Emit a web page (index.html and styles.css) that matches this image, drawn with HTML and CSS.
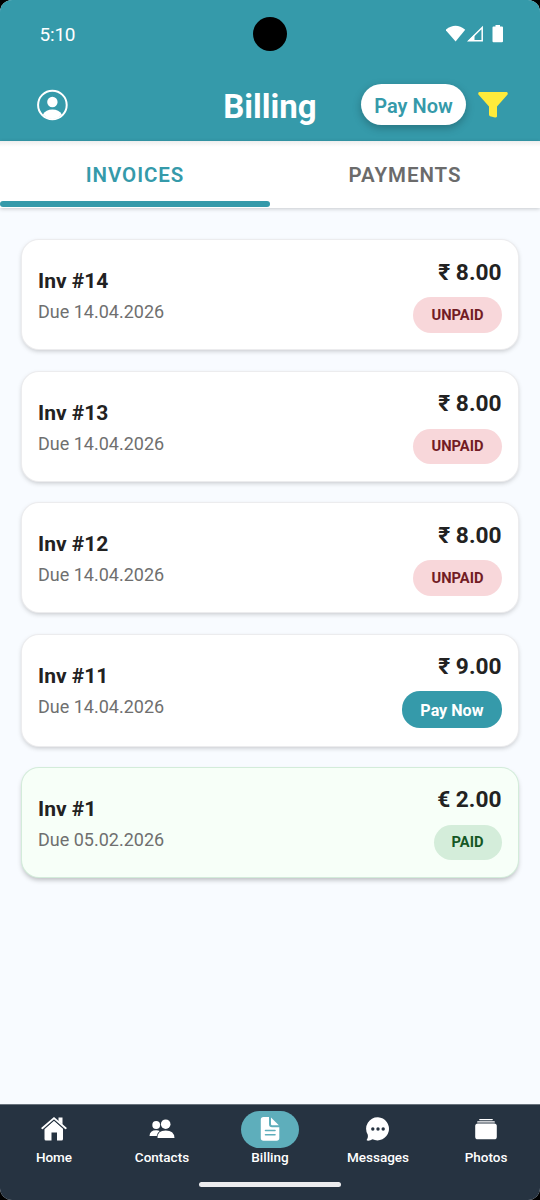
FILE: index.html
```html
<!DOCTYPE html>
<html lang="en">
<head>
<meta charset="utf-8">
<title>Billing</title>
<link rel="stylesheet" href="styles.css">
</head>
<body>
<div class="phone">
  <header class="header">
    <div class="status">
      <span class="clock">5:10</span>
      <span class="camera"></span>
      <svg class="status-icons" width="58" height="18" viewBox="0 0 58 18">
        <path d="M-.5 4.800Q9.600-3.400 19.200 4.800L9.600 16.500Z" fill="#fff"/>
        <path d="M36.200 2.500V15.800H22.800Z" fill="none" stroke="#fff" stroke-width="1.500"/>
        <path d="M22 16L28.500 9.500V16Z" fill="#fff"/>
        <path d="M49.500 0h4.500v1.500h2q1 0 1 1V16.200q0 1-1 1h-8.500q-1 0-1-1V2.500q0-1 1-1h2Z" fill="#fff"/>
      </svg>
    </div>
    <div class="toolbar">
      <svg class="profile" width="32" height="32" viewBox="0 0 32 32">
        <circle cx="16.400" cy="16" r="14.300" fill="none" stroke="#fff" stroke-width="2"/>
        <circle cx="16.400" cy="13" r="5.200" fill="#fff"/>
        <path d="M6.900 25.500Q9.900 20.500 16.400 20.500T25.900 25.500Q21.900 30 16.400 30T6.900 25.500Z" fill="#fff"/>
      </svg>
      <h1 class="title">Billing</h1>
      <div class="actions">
        <button class="pay-top">Pay Now</button>
        <svg class="filter" width="30" height="27" viewBox="0 0 30 27">
          <path d="M1.300 0H28.700Q30.200.4 29.600 2.500L19 14.500V24.500Q18.600 25.800 17 25.500L12 24.200Q11 23.800 11 22.500V14.500L.4 2.500Q-.2.400 1.300 0Z" fill="#ffeb3b"/>
        </svg>
      </div>
    </div>
  </header>
  <nav class="tabs">
    <a class="tab active">INVOICES</a>
    <a class="tab">PAYMENTS</a>
  </nav>
  <main class="list">
    <article class="card">
      <div><h2 class="name">Inv #14</h2><p class="due">Due 14.04.2026</p></div>
      <div class="side"><span class="price">₹ 8.00</span><span class="badge unpaid">UNPAID</span></div>
    </article>
    <article class="card">
      <div><h2 class="name">Inv #13</h2><p class="due">Due 14.04.2026</p></div>
      <div class="side"><span class="price">₹ 8.00</span><span class="badge unpaid">UNPAID</span></div>
    </article>
    <article class="card">
      <div><h2 class="name">Inv #12</h2><p class="due">Due 14.04.2026</p></div>
      <div class="side"><span class="price">₹ 8.00</span><span class="badge unpaid">UNPAID</span></div>
    </article>
    <article class="card payable">
      <div><h2 class="name">Inv #11</h2><p class="due">Due 14.04.2026</p></div>
      <div class="side"><span class="price">₹ 9.00</span><button class="badge pay">Pay Now</button></div>
    </article>
    <article class="card settled">
      <div><h2 class="name">Inv #1</h2><p class="due">Due 05.02.2026</p></div>
      <div class="side"><span class="price">€ 2.00</span><span class="badge paid">PAID</span></div>
    </article>
  </main>
  <footer class="bottom">
    <nav class="nav">
      <a class="item"><span class="icon"><svg width="26" height="26" viewBox="0 0 26 26">
        <path d="M4 12.500L13 4.500L22 12.500V23Q22 24.500 20.500 24.500H16V16.500H10.500V24.500H5Q3.500 24.500 3.500 23V12.500Z" fill="#fff"/>
        <path d="M17.500 1.500H21.500V9.500L17.500 6Z" fill="#fff"/>
        <path d="M1.300 13.300L13 3L24.700 13.300" fill="none" stroke="#263341" stroke-width="2.600"/>
        <path d="M1.300 12.200L13 2.100L24.700 12.200" fill="none" stroke="#fff" stroke-width="1.900" stroke-linecap="round" stroke-linejoin="round"/>
      </svg></span><span class="label">Home</span></a>
      <a class="item"><span class="icon"><svg width="26" height="26" viewBox="0 0 26 26">
        <circle cx="7.200" cy="9" r="3.900" fill="#fff"/>
        <path d="M.5 20Q.7 14.300 7.200 14.300Q9.200 14.300 10.700 14.900Q8.200 16.600 7.700 20Z" fill="#fff"/>
        <circle cx="16.700" cy="8.200" r="4.800" fill="#fff"/>
        <path d="M8.500 21.900Q8.400 14.600 16.700 14.600T25.500 21.900Z" fill="#fff"/>
      </svg></span><span class="label">Contacts</span></a>
      <a class="item"><span class="icon selected"><svg width="26" height="26" viewBox="0 0 26 26">
        <path d="M6.500 1H12V8Q12 11.300 15 11.300H22.300V22Q22.300 24.700 19.600 24.700H6.500Q3.800 24.700 3.800 22V3.700Q3.800 1 6.500 1Z" fill="#fff"/>
        <path d="M14 1.500L21.800 9.300H15Q14 9.300 14 8.300Z" fill="#fff"/>
        <path d="M8.500 14.500H18M8.500 18.700H18" stroke="#5eaebb" stroke-width="1.600" stroke-linecap="round"/>
      </svg></span><span class="label">Billing</span></a>
      <a class="item"><span class="icon"><svg width="26" height="26" viewBox="0 0 26 26">
        <path d="M13 1.200A11.600 11.600 0 1 1 7.500 23.300Q5 25 2.200 24.600Q1.300 24.400 1.900 23.500Q3.400 21.500 2.700 18.500A11.600 11.600 0 0 1 13 1.200Z" fill="#fff"/>
        <g fill="#263341"><circle cx="7.800" cy="13" r="1.700"/><circle cx="13" cy="13" r="1.700"/><circle cx="18.200" cy="13" r="1.700"/></g>
      </svg></span><span class="label">Messages</span></a>
      <a class="item"><span class="icon"><svg width="26" height="26" viewBox="0 0 26 26">
        <rect x="2.200" y="7.500" width="21.600" height="15.800" rx="2.600" fill="#fff"/>
        <path d="M4.800 5.900H21.200M6.800 3.600H19.200" stroke="#fff" stroke-width="1.400" stroke-linecap="round"/>
      </svg></span><span class="label">Photos</span></a>
    </nav>
    <div class="handle"></div>
  </footer>
</div>
</body>
</html>
```
FILE: styles.css
```css
* { box-sizing: border-box; }
body { margin: 0; background: #000; font-family: Roboto, "Noto Sans", sans-serif; }
h1, h2, p { margin: 0; }
button { border: 0; font-family: inherit; margin: 0; }
.phone { width: 540px; height: 1200px; display: flex; flex-direction: column; background: #f8fbff; border-radius: 12px; overflow: hidden; }
.header { height: 141px; flex: none; background: #359aaa; color: #fff; }
.status { height: 68px; display: grid; grid-template-columns: 1fr 34px 1fr; align-items: center; padding: 0 36px 0 39px; }
.clock { font-size: 19px; letter-spacing: -.2px; padding-left: .5px; }
.camera { width: 34px; height: 34px; border-radius: 50%; background: #000; margin-left: -1.500px; }
.status-icons { justify-self: end; }
.toolbar { height: 73px; display: grid; grid-template-columns: 1fr auto 1fr; align-items: center; padding: 0 32px 0 36px; }
.profile { margin-bottom: -1px; }
.title { font-size: 33px; line-height: 38px; font-weight: 700; padding-top: 4px; margin-left: -4px; }
.actions { display: flex; align-items: center; justify-content: flex-end; gap: 12px; }
.filter { margin-top: 1px; }
.pay-top { width: 105px; height: 41px; padding: 2px 0 0; border-radius: 21px; background: #fff; color: #359aaa; font-size: 20px; font-weight: 600; box-shadow: 0 3px 8px rgba(0, 0, 0, .25); }
.tabs { height: 67px; flex: none; display: grid; grid-template-columns: 1fr 1fr; background: linear-gradient(#eee, #fff 6px); box-shadow: 0 1px 4px rgba(0, 0, 0, .2); }
.tab { display: flex; flex-direction: column; align-items: center; justify-content: center; font-size: 20.500px; font-weight: 600; letter-spacing: .95px; color: #6b6b6b; }
.tab.active { color: #359aaa; }
.tab.active::after { content: ""; width: 100%; height: 6px; border-radius: 3px; background: #359aaa; margin-bottom: 1px; }
.tab.active { justify-content: space-between; padding-top: 22px; }
.list { flex: 1; display: flex; flex-direction: column; gap: 22.500px; padding: 32px 22px; }
.card { height: 109px; flex: none; display: flex; justify-content: space-between; align-items: center; padding: 2px 16px 0; background: #fff; border-radius: 17px; box-shadow: 0 0 0 1px #ececee, 0 2px 5px rgba(0, 0, 0, .22); }
.card.payable { height: 111px; padding-top: 1px; }
.card.settled { margin-top: -.5px; background: #f7fff8; box-shadow: 0 0 0 1px #d3ecda, 0 3px 5px rgba(0, 0, 0, .25); }
.name { font-size: 21px; line-height: 28px; font-weight: 700; color: #222; }
.due { font-size: 18px; line-height: 24px; color: #6f6f6f; margin-top: 5px; }
.side { display: flex; flex-direction: column; align-items: flex-end; gap: 10.500px; }
.price { font-size: 22.700px; line-height: 28px; font-weight: 700; color: #222; padding-right: .5px; }
.badge { display: flex; align-items: center; height: 35.500px; padding: 0 18.500px 0 18px; border-radius: 18px; font-size: 14.700px; font-weight: 700; }
.unpaid { background: #f8d7da; color: #721c24; }
.paid { background: #d4edda; color: #155724; }
.pay { height: 37px; padding-top: 1px; background: #359aaa; color: #fff; font-size: 16.100px; }
.bottom { height: 96px; flex: none; background: #263341; border-top: 1px solid #68727c; }
.nav { height: 76px; display: grid; grid-template-columns: repeat(5, 108px); }
.item { display: flex; flex-direction: column; align-items: center; padding-top: 6px; }
.icon { width: 58px; height: 37px; display: flex; align-items: center; justify-content: center; border-radius: 19px; }
.icon svg { margin-top: -1px; }
.selected { background: #5eaebb; }
.label { color: #fff; font-size: 13.500px; line-height: 18px; font-weight: 500; }
.handle { width: 142px; height: 5px; border-radius: 3px; background: #ececee; margin: 1px auto 0; }
```
